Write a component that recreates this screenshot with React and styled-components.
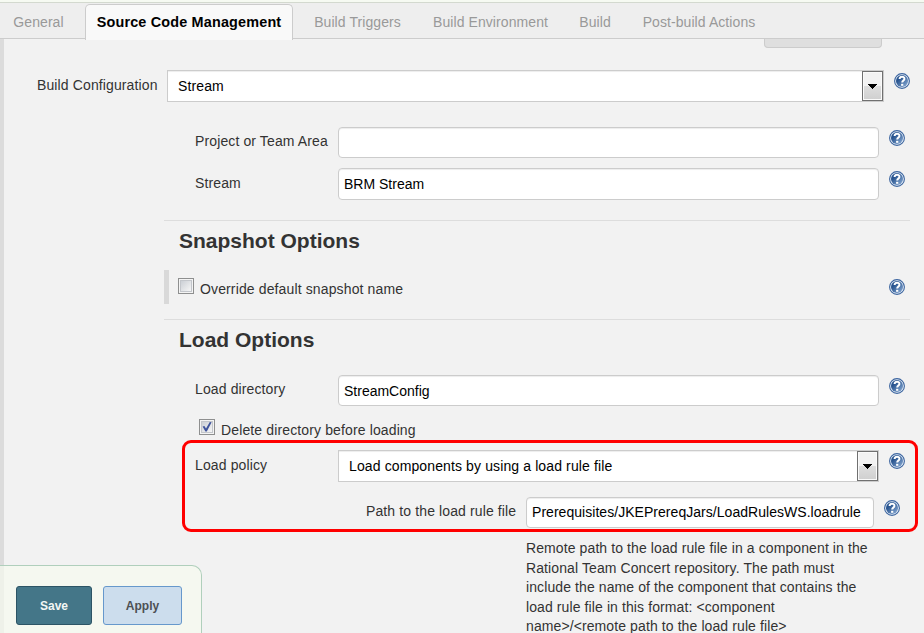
import React from "react";
import styled, { createGlobalStyle, css } from "styled-components";

const GlobalStyle = createGlobalStyle`
  * { box-sizing: border-box; }
  body {
    margin: 0;
    overflow: hidden;
    background: #f2f2f2;
    color: #333;
    font: 14px/20px "Liberation Sans", Arial, sans-serif;
  }
`;

const Page = styled.div`
  position: relative;
  display: flex;
  flex-direction: column;
  width: 924px;
  height: 633px;
  overflow: hidden;
  background: #f2f2f2;
`;

const TabBar = styled.nav`
  flex: none;
  display: flex;
  height: 39px;
  border-top: 2px solid #f6faf2;
  border-bottom: 1px solid #ccc;
  background: #eee;
  box-shadow: inset 0 1px 0 #d3d9cf;
`;

const Tab = styled.button`
  flex: none;
  width: ${(p) => p.$width}px;
  height: 35px;
  margin: 2px ${(p) => p.$after ?? 0}px 0 0;
  padding: 0 0 1px;
  border: 1px solid transparent;
  border-bottom: 0;
  background: none;
  color: #999;
  font: inherit;
  letter-spacing: 0.08px;
  white-space: nowrap;
  ${(p) =>
    p.$active &&
    css`
      height: 36px;
      padding-bottom: 2px;
      border-color: #ccc;
      border-radius: 5px 5px 0 0;
      background: #f9f9f9;
      color: #000;
      font-weight: bold;
      font-size: 14.4px;
      letter-spacing: 0.18px;
    `}
`;

const Main = styled.main`
  flex: 1;
  display: flex;
  flex-direction: column;
  width: 924px;
  border-left: 4px solid #dcdcdc;
  padding-right: 14px;
`;

const CutButton = styled.div`
  flex: none;
  align-self: flex-end;
  width: 118px;
  height: 9px;
  margin-right: 28px;
  border: 1px solid #ccc;
  border-top: 0;
  border-radius: 0 0 4px 4px;
  background: #dfdfdf;
`;

const Row = styled.div`
  flex: none;
  display: flex;
  align-items: flex-start;
  height: ${(p) => p.$height}px;
  padding-left: ${(p) => p.$indent}px;
  padding-top: ${(p) => p.$above ?? 0}px;
`;

const Label = styled.label`
  flex: none;
  width: ${(p) => p.$width}px;
  padding-top: ${(p) => p.$drop ?? 5}px;
  letter-spacing: 0.12px;
  white-space: nowrap;
`;

const TextInput = styled.input`
  flex: none;
  width: ${(p) => p.$width}px;
  height: ${(p) => p.$height ?? 31}px;
  margin: 0;
  padding: 0 5px ${(p) => p.$lift ?? 0}px;
  border: 1px solid #ccc;
  border-radius: 4px;
  outline: 0;
  background: #fff;
  box-shadow: inset 0 1px 1px rgba(0, 0, 0, 0.075);
  color: #000;
  font: inherit;
  letter-spacing: ${(p) => p.$spacing ?? 0}px;
`;

const SelectBox = styled.div`
  flex: none;
  display: flex;
  justify-content: space-between;
  width: ${(p) => p.$width}px;
  height: 32px;
  padding-left: 10px;
  border: 1px solid #ccc;
  background: #fff;
  box-shadow: inset 0 1px 1px rgba(0, 0, 0, 0.075);
  color: #000;
  letter-spacing: 0.12px;
  line-height: 31px;
`;

const SelectArrow = styled.span`
  display: flex;
  align-items: center;
  justify-content: center;
  width: 21px;
  height: 30px;
  border: 1px solid #707070;
  background: linear-gradient(#f2f2f2 0 50%, #dedede 50%, #cfcfcf);
  box-shadow: inset 0 0 0 1px #fafafa;
`;

const HelpButton = styled.span`
  flex: none;
  width: 16px;
  height: 16px;
  margin: ${(p) => p.$drop ?? 3}px ${(p) => p.$after ?? 0}px 0 10px;
  svg { display: block; }
`;

const Section = styled.section`
  flex: none;
  height: ${(p) => p.$height}px;
  margin-left: 160px;
  border-top: 1px solid #ddd;
`;

const Heading = styled.h2`
  height: 49px;
  margin: 0;
  padding: 8px 0 0 15px;
  font-size: 21px;
  line-height: 24px;
`;

const OptionRow = styled.div`
  display: flex;
  height: 34px;
  padding-left: 9px;
  border-left: 5px solid #d9d9d9;
`;

const CheckFrame = styled.span`
  flex: none;
  width: 16px;
  height: 16px;
  margin-top: ${(p) => p.$drop}px;
  padding: 2px;
  border: 1px solid #8e8f8f;
  background: linear-gradient(135deg, #cbcfd5, #f6f6f6) content-box, #f4f4f4;
  box-shadow: inset 0 0 0 1px #f4f4f4, inset 0 0 0 2px #c3c6cb;
  svg { display: block; margin: -1px; }
`;

const OptionText = styled.span`
  flex: 1;
  padding: ${(p) => p.$drop}px 0 0 6px;
  letter-spacing: 0.13px;
`;

const PolicyGroup = styled.div`
  flex: none;
  width: 736px;
  height: 92px;
  margin-left: 178px;
  padding-top: 7px;
  border: 3px solid #f00;
  border-radius: 9px;
`;

const Description = styled.p`
  flex: none;
  width: 370px;
  margin: 7px 0 0 522px;
  letter-spacing: 0.1px;
  line-height: 19.5px;
`;

const ActionBar = styled.footer`
  position: absolute;
  left: 0;
  bottom: 0;
  display: flex;
  gap: 11px;
  width: 202px;
  height: 68px;
  padding: 20px 0 0 16px;
  border: solid #b0cfbc;
  border-width: 1px 1px 0 0;
  border-radius: 0 10px 0 0;
  background: linear-gradient(90deg, #eef1e9 4px, #f5f8f0 4px);
`;

const ActionButton = styled.button`
  width: ${(p) => (p.$primary ? 76 : 79)}px;
  height: 39px;
  padding: 0;
  border: 1px solid ${(p) => (p.$primary ? "#2c5465" : "#6698cc")};
  border-radius: 3px;
  background: ${(p) => (p.$primary ? "#447688" : "#ccdded")};
  color: ${(p) => (p.$primary ? "#f3f6f4" : "#4d5054")};
  font: bold 12px "Liberation Sans", Arial, sans-serif;
`;

function Help({ drop, after }) {
  return (
    <HelpButton $drop={drop} $after={after}>
      <svg width="16" height="16" viewBox="0 0 16 16">
        <defs>
          <linearGradient id="helpFill" x1="0" y1="0" x2="1" y2="1">
            <stop offset="0.3" stopColor="#28548f" />
            <stop offset="1" stopColor="#8fb0d8" />
          </linearGradient>
        </defs>
        <circle cx="8" cy="8" r="7.4" fill="#e8eff8" stroke="#3c659f" strokeWidth="1.1" />
        <circle cx="8" cy="8" r="6" fill="url(#helpFill)" />
        <path d="M5.6 6.1C5.6 2.9 10.6 2.9 10.4 5.9C10.4 7.5 8.2 7.6 8.2 9.6" fill="none" stroke="#fff" strokeWidth="2" />
        <rect x="7.1" y="10.8" width="2.2" height="2" fill="#fff" />
      </svg>
    </HelpButton>
  );
}

function Select({ width, children }) {
  return (
    <SelectBox $width={width}>
      {children}
      <SelectArrow>
        <svg width="9" height="5" viewBox="0 0 9 5" shapeRendering="crispEdges">
          <path d="M0 0H9L4.5 5Z" fill="#000" />
        </svg>
      </SelectArrow>
    </SelectBox>
  );
}

function Checkbox({ checked, drop }) {
  return (
    <CheckFrame $drop={drop}>
      {checked && (
        <svg width="12" height="12" viewBox="0 0 12 12">
          <path d="M1.6 5.4L3.4 5L5 7.6L8.8 1L10.6 1.2L5.8 10.6H4.4Z" fill="#3f549c" />
        </svg>
      )}
    </CheckFrame>
  );
}

const tabs = [
  { name: "General", width: 77, after: 8 },
  { name: "Source Code Management", width: 208, active: true },
  { name: "Build Triggers", width: 129 },
  { name: "Build Environment", width: 137 },
  { name: "Build", width: 72 },
  { name: "Post-build Actions", width: 136 },
];

export default function App() {
  return (
    <>
      <GlobalStyle />
      <Page>
        <TabBar>
          {tabs.map((tab) => (
            <Tab key={tab.name} $width={tab.width} $after={tab.after} $active={tab.active}>
              {tab.name}
            </Tab>
          ))}
        </TabBar>
        <Main>
          <CutButton />
          <Row $height={79} $indent={33} $above={22}>
            <Label $width={130}>Build Configuration</Label>
            <Select width={717}>Stream</Select>
            <Help />
          </Row>
          <Row $height={41} $indent={191}>
            <Label $width={143} $drop={4}>Project or Team Area</Label>
            <TextInput $width={541} defaultValue="" />
            <Help />
          </Row>
          <Row $height={52} $indent={191}>
            <Label $width={143}>Stream</Label>
            <TextInput $width={541} $height={32} defaultValue="BRM Stream" />
            <Help />
          </Row>
          <Section $height={99}>
            <Heading>Snapshot Options</Heading>
            <OptionRow>
              <Checkbox drop={8} />
              <OptionText $drop={9}>Override default snapshot name</OptionText>
              <Help drop={9} after={5} />
            </OptionRow>
          </Section>
          <Section $height={56}>
            <Heading>Load Options</Heading>
          </Section>
          <Row $height={44} $indent={191}>
            <Label $width={143} $drop={4}>Load directory</Label>
            <TextInput $width={541} defaultValue="StreamConfig" />
            <Help />
          </Row>
          <Row $height={21} $indent={195}>
            <Checkbox checked drop={0} />
            <OptionText $drop={1}>Delete directory before loading</OptionText>
          </Row>
          <PolicyGroup>
            <Row $height={47} $indent={10}>
              <Label $width={143}>Load policy</Label>
              <Select width={541}>Load components by using a load rule file</Select>
              <Help />
            </Row>
            <Row $height={31} $indent={181}>
              <Label $width={160} $drop={4}>Path to the load rule file</Label>
              <TextInput
                $width={348}
                $lift={2}
                $spacing={0.04}
                defaultValue="Prerequisites/JKEPrereqJars/LoadRulesWS.loadrule"
              />
              <Help />
            </Row>
          </PolicyGroup>
          <Description>
            Remote path to the load rule file in a component in the
            <br />
            Rational Team Concert repository. The path must
            <br />
            include the name of the component that contains the
            <br />
            load rule file in this format: &lt;component
            <br />
            name&gt;/&lt;remote path to the load rule file&gt;
          </Description>
        </Main>
        <ActionBar>
          <ActionButton $primary>Save</ActionButton>
          <ActionButton>Apply</ActionButton>
        </ActionBar>
      </Page>
    </>
  );
}
